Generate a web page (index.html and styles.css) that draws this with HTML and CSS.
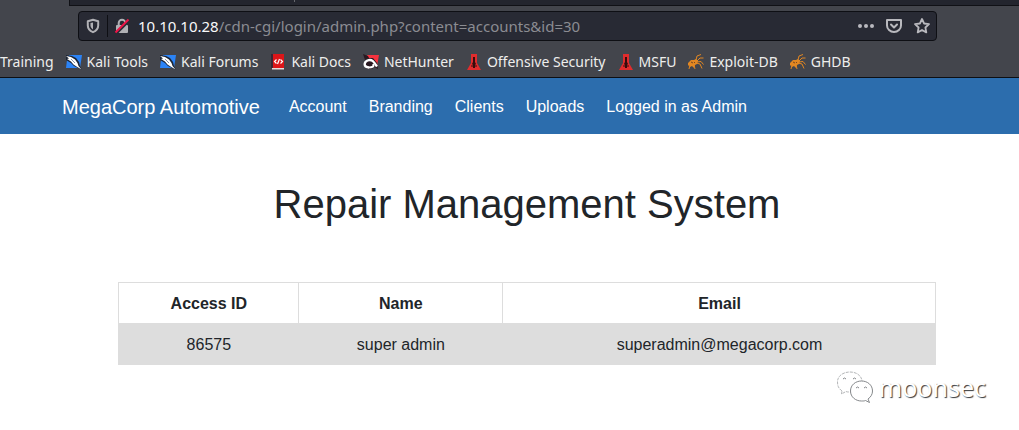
FILE: index.html
```html
<!DOCTYPE html>
<html lang="en">
<head>
<meta charset="utf-8">
<title>Repair Management System</title>
<link rel="stylesheet" href="styles.css">
</head>
<body>
<svg class="defs" aria-hidden="true">
  <symbol id="kali" viewBox="0 0 16 16">
    <path d="M3 1h13l-2 13H0l1-8z" fill="#2b83f6"/>
    <path d="M0 1l6 1 4 2 3 4 1 4 2 4-4-2-4-2-3-3-5-3z" fill="#1c2535"/>
    <path d="M0 2l5 1 4 2.500 2.500 3.500 1 3 3 3.500-5-3-3-2L5 7.500 1 5l2-.5z" fill="#fff"/>
    <path d="M5 5l4 4" stroke="#8494aa" fill="none"/>
  </symbol>
  <symbol id="docs" viewBox="0 0 16 16">
    <path d="M2 0h12v15H2z" fill="#dc1518"/>
    <path d="M1 0h2v14H1z" fill="#3b2634"/>
    <path d="M2 14h12v1.500H2z" fill="#e9dada"/>
    <path d="M6.500 5.500l-2 2 2 2M10.500 5.500l2 2-2 2M9.500 5L7.500 10" stroke="#fff" stroke-width="1.200" fill="none"/>
  </symbol>
  <symbol id="hunter" viewBox="0 0 16 16">
    <path d="M4 1h12l-2 11-3-4-6-3z" fill="#f5323e"/>
    <path d="M0 0l5 2 1 2-4 2z" fill="#291820"/>
    <path d="M2 9l3-5 5 0 4 5 1 6-4-2-2 2H4l-3-3z" fill="#291820"/>
    <path d="M6 13.500C0 13 1 8 4.500 6.500 9 4.500 11 8 14 12.500" stroke="#fff" stroke-width="2.400" fill="none"/>
    <path d="M5.500 13.500c4 0 6-1 4.500-3.500" stroke="#fff" stroke-width="2" fill="none"/>
  </symbol>
  <symbol id="offsec" viewBox="0 0 16 16">
    <path d="M5 0h6v9l4 7H1l4-7z" fill="#e02c2d"/>
    <path d="M7 3h2v5l1 2-1 1v3H7v-3l-1-1 1-2z" fill="#370c0d"/>
    <path d="M5 12h6" stroke="#370c0d"/>
  </symbol>
  <symbol id="bug" viewBox="0 0 16 16">
    <path d="M0 9l3-3h3l2-1 2 2-1 3-2 1-1 3-2-2-2 1-1-2-1 1z" fill="#e28722"/>
    <path d="M8 6l1-4 4-1.500M9 7l3-3h3.500M9 8l4-.5 2.500 3M8 9l4 1 2 4.500M6 11l1 4M2 11l-1 4" stroke="#e28722" fill="none"/>
    <path d="M3 8l2 1M6 8l1 1" stroke="#784821"/>
  </symbol>
</svg>

<header class="browser">
  <div class="tabs"><span class="tab-line"></span></div>
  <div class="toolbar">
    <div class="address">
      <button class="icon-button shield" aria-label="Tracking protection">
        <svg width="16" height="16" viewBox="0 0 16 16"><path d="M8 1.800l5.200 1.400v4.300c0 3.200-2 5.300-5.200 6.700-3.200-1.400-5.200-3.500-5.200-6.700V3.200z" fill="none" stroke="#b1b1b5" stroke-width="2" stroke-linejoin="round"/><path d="M8 4.500v7C6.200 10.500 5.500 9 5.500 7.300V5z" fill="#b1b1b5"/></svg>
      </button>
      <button class="icon-button lock" aria-label="Connection is not secure">
        <svg width="16" height="16" viewBox="0 0 16 16"><path d="M4.700 8V5a3.300 3.300 0 0 1 6.600 0v3" fill="none" stroke="#b1b1b5" stroke-width="2"/><rect x="2" y="7" width="12" height="8" rx="1" fill="#b1b1b5"/><path d="M2 15.500L15.500 2" stroke="#282a34" stroke-width="3"/><path d="M1.500 14.500L14.500 1.500" stroke="#ee1446" stroke-width="2"/></svg>
      </button>
      <label class="host" for="url">10.10.10.28</label>
      <input class="path" id="url" type="text" value="/cdn-cgi/login/admin.php?content=accounts&amp;id=30" spellcheck="false">
      <div class="actions">
        <button class="icon-button" aria-label="Page actions">
          <svg width="16" height="16" viewBox="0 0 16 16" fill="#b9b9be"><circle cx="2" cy="8" r="2"/><circle cx="8" cy="8" r="2"/><circle cx="14" cy="8" r="2"/></svg>
        </button>
        <button class="icon-button" aria-label="Save to Pocket">
          <svg width="16" height="16" viewBox="0 0 16 16" fill="none" stroke="#b9b9be" stroke-width="2" stroke-linejoin="round" stroke-linecap="round"><path d="M1 2h14v5.500a7 6.500 0 0 1-14 0z"/><path d="M5 6.500l3 3 3-3"/></svg>
        </button>
        <button class="icon-button" aria-label="Bookmark this page">
          <svg width="16" height="16" viewBox="0 0 16 16" fill="none" stroke="#b9b9be" stroke-width="1.800" stroke-linejoin="round"><path d="M8 1l2.100 4.500 4.900.6-3.600 3.400.9 4.900L8 12l-4.300 2.400.9-4.900L1 6.100l4.900-.6z"/></svg>
        </button>
      </div>
    </div>
  </div>
  <nav class="bookmarks" aria-label="Bookmarks">
    <a href="#">Training</a>
    <a href="#"><svg class="favicon"><use href="#kali"/></svg>Kali Tools</a>
    <a href="#"><svg class="favicon"><use href="#kali"/></svg>Kali Forums</a>
    <a href="#"><svg class="favicon"><use href="#docs"/></svg>Kali Docs</a>
    <a href="#"><svg class="favicon"><use href="#hunter"/></svg>NetHunter</a>
    <a href="#"><svg class="favicon"><use href="#offsec"/></svg>Offensive Security</a>
    <a href="#"><svg class="favicon"><use href="#offsec"/></svg>MSFU</a>
    <a href="#"><svg class="favicon"><use href="#bug"/></svg>Exploit-DB</a>
    <a href="#"><svg class="favicon"><use href="#bug"/></svg>GHDB</a>
  </nav>
</header>

<nav class="navbar" aria-label="Main">
  <a class="brand" href="#">MegaCorp Automotive</a>
  <a href="#">Account</a>
  <a href="#">Branding</a>
  <a href="#">Clients</a>
  <a href="#">Uploads</a>
  <a href="#">Logged in as Admin</a>
</nav>

<main class="content">
  <h1>Repair Management System</h1>
  <table class="accounts">
    <colgroup><col class="col-id"><col class="col-name"><col></colgroup>
    <thead><tr><th>Access ID</th><th>Name</th><th>Email</th></tr></thead>
    <tbody><tr><td>86575</td><td>super admin</td><td>superadmin@megacorp.com</td></tr></tbody>
  </table>
</main>

<footer class="credit">
  <svg width="36" height="32" viewBox="0 0 36 32" fill="#fff" stroke="#85888b" stroke-width="1">
    <path d="M5 20C1 17 .5 14 .5 11 .5 5 6 1 13 1s12 4 12 10-5 10-12 10c-2 0-3 0-4-.5L4.500 23z" stroke="#b4b6b8" stroke-dasharray="3 1"/>
    <path d="M6 8q1.500-2 3 0M16 8q1.500-2 3 0" fill="none"/>
    <path d="M31 28c3-2 4.500-5 4.500-8 0-6-5-10-11-10s-11 4-11 10 5 10 11 10c2 0 3 0 4-.5l4 2z"/>
    <path d="M19 17q1.500-2 3 0M27 17q1.500-2 3 0" fill="none"/>
  </svg>
  <span>moonsec</span>
</footer>
</body>
</html>
```
FILE: styles.css
```css
* {
  box-sizing: border-box;
}

body {
  margin: 0;
  background: #fff;
  color: #212529;
  font: 16px/24px "Liberation Sans", Arial, sans-serif;
}

a {
  color: inherit;
  text-decoration: none;
}

.defs {
  position: absolute;
  width: 0;
  height: 0;
}

.browser {
  background: #43454c;
  border-bottom: 1px solid #0d0f14;
  color: #eeeeec;
  font-family: "Noto Sans", sans-serif;
}

.tabs {
  height: 6px;
  margin-left: 69px;
  padding-left: 224px;
  background: #23252e;
  border-bottom: 1px solid #101116;
  border-left: 1px solid #101116;
}

.tab-line {
  display: block;
  width: 1px;
  height: 2px;
  background: #65676d;
}

.toolbar {
  padding: 5px 82px 5px 78px;
}

.address {
  display: flex;
  align-items: center;
  height: 30px;
  padding: 0 6px;
  background: #282a34;
  border: 1px solid #0e0f14;
  border-radius: 4px;
  font-size: 15px;
}

.icon-button {
  display: flex;
  padding: 0;
  background: none;
  border: 0;
}

.shield {
  padding-right: 6px;
  border-right: 1px solid #0e0f14;
  height: 22px;
  align-items: center;
}

.lock {
  margin: 0 8px 0 6px;
}

.host {
  color: #f9f9fa;
}

.path {
  flex: 1;
  min-width: 0;
  padding: 0;
  background: none;
  border: 0;
  outline: 0;
  color: #8b8c92;
  font: inherit;
}

.actions {
  display: flex;
  gap: 12px;
}

.bookmarks {
  display: flex;
  gap: 12px;
  height: 31px;
  overflow: hidden;
  font-size: 14px;
  line-height: 31px;
  white-space: nowrap;
}

.bookmarks a {
  display: flex;
  align-items: center;
  gap: 5px;
}

.favicon {
  width: 16px;
  height: 16px;
}

.navbar {
  display: flex;
  align-items: center;
  gap: 22px;
  min-height: 56px;
  padding: 1px 62px 0;
  background: #2c6dad;
  color: #fff;
}

.brand {
  margin-right: 7px;
  font-size: 20px;
}

.content {
  padding: 46px 83px 0 118px;
  text-align: center;
}

h1 {
  margin: 0 0 54px;
  font-size: 40px;
  font-weight: 400;
  line-height: 48px;
}

.accounts {
  width: 100%;
  border-collapse: collapse;
  table-layout: fixed;
}

.col-id {
  width: 22%;
}

.col-name {
  width: 25%;
}

.accounts th,
.accounts td {
  padding: 9px 8px 7px 9px;
  border: 1px solid #ddd;
}

.accounts tbody {
  background: #ddd;
}

.credit {
  display: flex;
  justify-content: flex-end;
  align-items: center;
  gap: 6px;
  padding: 6px 33px 0 0;
  color: #fff;
  font: 25px/32px "Noto Sans", sans-serif;
  text-shadow: 1px 1px 1px #34383c;
}
```
